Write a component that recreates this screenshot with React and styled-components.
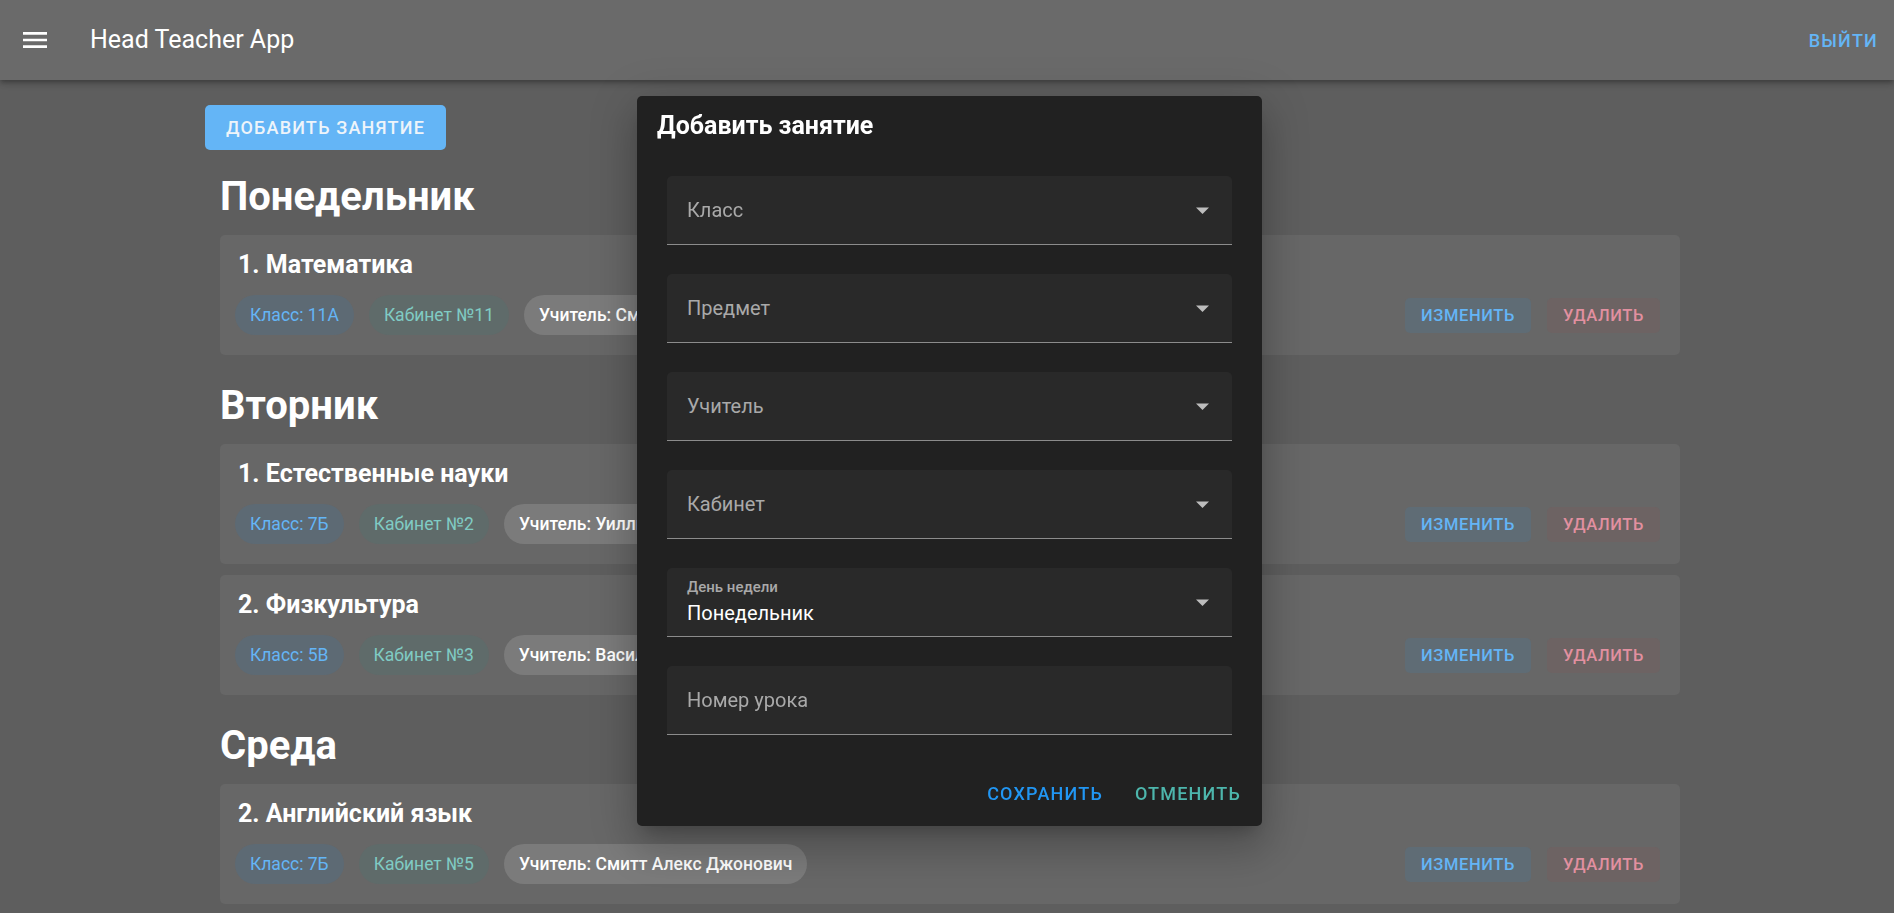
import React from 'react';
import styled, { createGlobalStyle } from 'styled-components';

const GlobalStyle = createGlobalStyle`
  html, body {
    margin: 0;
    background: #5e5e5e;
    overflow: hidden;
  }
  body {
    font-family: Roboto, "Noto Sans", "Liberation Sans", sans-serif;
    color: #fff;
  }
  * {
    box-sizing: border-box;
  }
`;

const AppBar = styled.header`
  position: relative;
  z-index: 1;
  height: 80px;
  display: flex;
  align-items: center;
  padding: 0 6px 0 19px;
  background: #6a6a6a;
  box-shadow: 0 2px 4px -1px rgba(0, 0, 0, 0.2), 0 4px 5px 0 rgba(0, 0, 0, 0.14),
    0 1px 10px 0 rgba(0, 0, 0, 0.12);
`;

const MenuIcon = styled.svg`
  width: 32px;
  height: 32px;
  fill: #fff;
  flex-shrink: 0;
`;

const AppTitle = styled.div`
  margin-left: 39px;
  flex: 1;
  font-size: 25px;
  line-height: 32px;
  font-weight: 400;
  color: #fff;
`;

const TextButton = styled.button`
  border: 0;
  background: transparent;
  height: 44px;
  padding: 0 10px;
  font-family: inherit;
  font-size: 18px;
  font-weight: 500;
  letter-spacing: 1.2px;
  text-transform: uppercase;
  color: ${(p) => p.color || '#64b5f6'};
  cursor: pointer;
`;

const Main = styled.main`
  padding: 25px 0 0 205px;
`;

const AddButton = styled.button`
  height: 45px;
  width: 241px;
  border: 0;
  border-radius: 5px;
  background: #64b5f6;
  color: #eef4fa;
  font-family: inherit;
  font-size: 18px;
  font-weight: 500;
  letter-spacing: 1.2px;
  text-transform: uppercase;
`;

const Section = styled.section`
  width: 1460px;
  margin: ${(p) => (p.first ? '23px' : '27px')} 0 0 15px;
`;

const DayTitle = styled.h2`
  margin: 0 0 14px;
  font-size: 40px;
  line-height: 48px;
  font-weight: 700;
  color: #fff;
`;

const CardList = styled.div`
  display: flex;
  flex-direction: column;
  gap: 11px;
`;

const Card = styled.div`
  height: 120px;
  padding: 16px 20px 20px 15px;
  border-radius: 5px;
  background: #676767;
`;

const LessonTitle = styled.div`
  margin-left: 3px;
  font-size: 25px;
  line-height: 28px;
  font-weight: 700;
  color: #fff;
`;

const CardRow = styled.div`
  margin-top: 16px;
  display: flex;
  align-items: center;
  justify-content: space-between;
`;

const Chips = styled.div`
  display: flex;
  gap: 15px;
`;

const chipTones = {
  class: { bg: '#5d6a74', fg: '#64b5f6', weight: 400 },
  room: { bg: '#5f6b6a', fg: '#80cbc4', weight: 400 },
  teacher: { bg: '#7b7b7b', fg: '#ffffff', weight: 500 },
};

const Chip = styled.span`
  height: 40px;
  padding: 0 15px;
  display: inline-flex;
  align-items: center;
  border-radius: 20px;
  font-size: 17.5px;
  white-space: nowrap;
  background: ${(p) => chipTones[p.tone].bg};
  color: ${(p) => chipTones[p.tone].fg};
  font-weight: ${(p) => chipTones[p.tone].weight};
`;

const Actions = styled.div`
  display: flex;
  gap: 16px;
`;

const actionTones = {
  edit: { bg: '#5f6c75', fg: '#64b5f6' },
  remove: { bg: '#6d6363', fg: '#e290a0' },
};

const ActionButton = styled.button`
  height: 35px;
  padding: 0 16px;
  border: 0;
  border-radius: 5px;
  font-family: inherit;
  font-size: 16.5px;
  font-weight: 500;
  letter-spacing: 0.6px;
  text-transform: uppercase;
  background: ${(p) => actionTones[p.tone].bg};
  color: ${(p) => actionTones[p.tone].fg};
`;

const Overlay = styled.div`
  position: fixed;
  inset: 0;
  z-index: 10;
  display: flex;
  align-items: flex-start;
  padding: 96px 0 0 637px;
`;

const Dialog = styled.div`
  width: 625px;
  height: 730px;
  display: flex;
  flex-direction: column;
  border-radius: 5px;
  background: #212121;
  box-shadow: 0 11px 15px -7px rgba(0, 0, 0, 0.2), 0 24px 38px 3px rgba(0, 0, 0, 0.14),
    0 9px 46px 8px rgba(0, 0, 0, 0.12);
`;

const DialogTitle = styled.h3`
  margin: 0;
  padding: 14px 20px 0;
  font-size: 25px;
  line-height: 32px;
  font-weight: 700;
  color: #fff;
`;

const Form = styled.div`
  margin-top: 34px;
  padding: 0 30px;
  display: flex;
  flex-direction: column;
  gap: 29px;
`;

const Field = styled.div`
  height: 69px;
  display: flex;
  align-items: center;
  padding: 0 23px 0 20px;
  border-radius: 5px 5px 0 0;
  border-bottom: 1px solid #8c8c8c;
  background: #292929;
`;

const FieldText = styled.div`
  flex: 1;
  display: flex;
  flex-direction: column;
`;

const FieldLabel = styled.span`
  font-size: ${(p) => (p.small ? '15px' : '20px')};
  line-height: ${(p) => (p.small ? '16px' : '24px')};
  font-weight: ${(p) => (p.small ? 500 : 400)};
  color: #a9a9a9;
`;

const FieldValue = styled.span`
  margin-top: 6px;
  font-size: 20px;
  line-height: 24px;
  color: #fff;
`;

const Arrow = styled.svg`
  width: 13px;
  height: 7px;
  fill: #bdbdbd;
  flex-shrink: 0;
`;

const DialogActions = styled.div`
  margin-top: 36px;
  padding: 0 11px;
  display: flex;
  justify-content: flex-end;
  gap: 12px;
`;

const schedule = [
  {
    day: 'Понедельник',
    lessons: [
      { n: 1, subject: 'Математика', cls: '11А', room: '11', teacher: 'Смитт Алекс Джонович' },
    ],
  },
  {
    day: 'Вторник',
    lessons: [
      { n: 1, subject: 'Естественные науки', cls: '7Б', room: '2', teacher: 'Уилльямс Джон Робертович' },
      { n: 2, subject: 'Физкультура', cls: '5В', room: '3', teacher: 'Васильев Пётр Иванович' },
    ],
  },
  {
    day: 'Среда',
    lessons: [
      { n: 2, subject: 'Английский язык', cls: '7Б', room: '5', teacher: 'Смитт Алекс Джонович' },
    ],
  },
];

const fields = [
  { label: 'Класс', select: true },
  { label: 'Предмет', select: true },
  { label: 'Учитель', select: true },
  { label: 'Кабинет', select: true },
  { label: 'День недели', value: 'Понедельник', select: true },
  { label: 'Номер урока' },
];

function SelectField({ label, value, select }) {
  return (
    <Field>
      <FieldText>
        <FieldLabel small={!!value}>{label}</FieldLabel>
        {value && <FieldValue>{value}</FieldValue>}
      </FieldText>
      {select && (
        <Arrow viewBox="0 0 13 7">
          <path d="M0 0.5h13L6.5 7z" />
        </Arrow>
      )}
    </Field>
  );
}

function LessonCard({ lesson }) {
  return (
    <Card>
      <LessonTitle>
        {lesson.n}. {lesson.subject}
      </LessonTitle>
      <CardRow>
        <Chips>
          <Chip tone="class">Класс: {lesson.cls}</Chip>
          <Chip tone="room">Кабинет №{lesson.room}</Chip>
          <Chip tone="teacher">Учитель: {lesson.teacher}</Chip>
        </Chips>
        <Actions>
          <ActionButton tone="edit">Изменить</ActionButton>
          <ActionButton tone="remove">Удалить</ActionButton>
        </Actions>
      </CardRow>
    </Card>
  );
}

export default function App() {
  return (
    <>
      <GlobalStyle />
      <AppBar>
        <MenuIcon viewBox="0 0 24 24">
          <path d="M3 18h18v-2H3v2zm0-5h18v-2H3v2zm0-7v2h18V6H3z" />
        </MenuIcon>
        <AppTitle>Head Teacher App</AppTitle>
        <TextButton>Выйти</TextButton>
      </AppBar>
      <Main>
        <AddButton>Добавить занятие</AddButton>
        {schedule.map((d, i) => (
          <Section key={d.day} first={i === 0}>
            <DayTitle>{d.day}</DayTitle>
            <CardList>
              {d.lessons.map((l) => (
                <LessonCard key={l.subject} lesson={l} />
              ))}
            </CardList>
          </Section>
        ))}
      </Main>
      <Overlay>
        <Dialog>
          <DialogTitle>Добавить занятие</DialogTitle>
          <Form>
            {fields.map((f) => (
              <SelectField key={f.label} {...f} />
            ))}
          </Form>
          <DialogActions>
            <TextButton color="#2196f3">Сохранить</TextButton>
            <TextButton color="#4db6ac">Отменить</TextButton>
          </DialogActions>
        </Dialog>
      </Overlay>
    </>
  );
}
